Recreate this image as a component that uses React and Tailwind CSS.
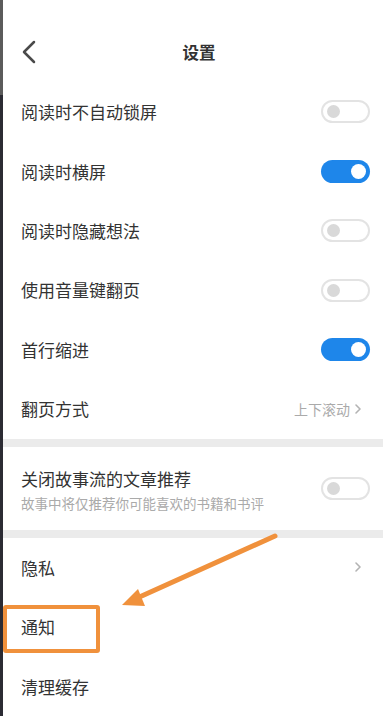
const font = { fontFamily: '"Noto Sans CJK SC", "Noto Sans", sans-serif' };

function Toggle({ on }) {
  if (on) {
    return (
      <div className="w-[49px] h-[23px] rounded-full bg-[#1e86ea] flex items-center justify-end pr-[4px]">
        <div className="w-[15px] h-[15px] rounded-full bg-white" />
      </div>
    );
  }
  return (
    <div className="w-[49px] h-[23px] rounded-full border-2 border-[#e3e3e3] bg-white flex items-center pl-[4px]">
      <div className="w-[13px] h-[13px] rounded-full bg-[#d9d9d9]" />
    </div>
  );
}

function Arrow() {
  return (
    <svg width="8" height="12" viewBox="0 0 8 12" className="mr-[8px]">
      <path d="M2 2 L6 6 L2 10" fill="none" stroke="#b3b3b3" strokeWidth="1.6" strokeLinecap="round" strokeLinejoin="round" />
    </svg>
  );
}

function Row({ label, children }) {
  return (
    <div className="h-[60px] flex items-center justify-between pl-[18px] pr-[13px]">
      <span className="text-[17px] text-[#333]">{label}</span>
      {children}
    </div>
  );
}

export default function App() {
  return (
    <div className="w-[383px] h-[716px] flex overflow-hidden bg-white relative" style={font}>
      {/* left strip */}
      <div className="w-[3px] flex flex-col shrink-0">
        <div className="h-[95px] bg-[#5b5b5b]" />
        <div className="flex-1 bg-[#2b2b33]" />
      </div>

      <div className="flex-1 flex flex-col">
        {/* header */}
        <div className="h-[83px] relative">
          <svg width="20" height="26" viewBox="0 0 20 26" className="absolute left-[17px] top-[39px]">
            <path d="M14 3 L4 13 L14 23" fill="none" stroke="#4a4a4a" strokeWidth="2.5" strokeLinecap="round" strokeLinejoin="round" />
          </svg>
          <div className="absolute left-0 right-0 top-[40px] text-center text-[16.5px] leading-[24px] font-bold text-[#333] pl-[12px]">
            设置
          </div>
        </div>

        <Row label="阅读时不自动锁屏"><Toggle /></Row>
        <Row label="阅读时横屏"><Toggle on /></Row>
        <Row label="阅读时隐藏想法"><Toggle /></Row>
        <Row label="使用音量键翻页"><Toggle /></Row>
        <Row label="首行缩进"><Toggle on /></Row>
        <Row label="翻页方式">
          <div className="flex items-center gap-[4px] text-[14px] text-[#aaa]">
            上下滚动
            <Arrow />
          </div>
        </Row>

        <div className="h-[8px] bg-[#ebebeb]" />

        <div className="h-[84px] flex items-center justify-between pl-[18px] pr-[13px]">
          <div className="flex flex-col pt-[5px]">
            <span className="text-[17px] text-[#333] leading-[25px]">关闭故事流的文章推荐</span>
            <span className="text-[13.5px] text-[#aaa] leading-[25px]">故事中将仅推荐你可能喜欢的书籍和书评</span>
          </div>
          <Toggle />
        </div>

        <div className="h-[8px] bg-[#ebebeb]" />

        <Row label="隐私">
          <Arrow />
        </Row>
        <Row label="通知" />
        <Row label="清理缓存" />
      </div>

      {/* annotation */}
      <div className="absolute left-[3px] top-[605px] w-[97px] h-[48px] border-[4px] border-[#f0913c] rounded-[3px]" />
      <svg className="absolute left-0 top-0 pointer-events-none" width="383" height="716">
        <line x1="275" y1="536" x2="135" y2="599" stroke="#f0913c" strokeWidth="5" strokeLinecap="round" />
        <polygon points="122,605 138,589 145,606" fill="#f0913c" />
      </svg>
    </div>
  );
}
